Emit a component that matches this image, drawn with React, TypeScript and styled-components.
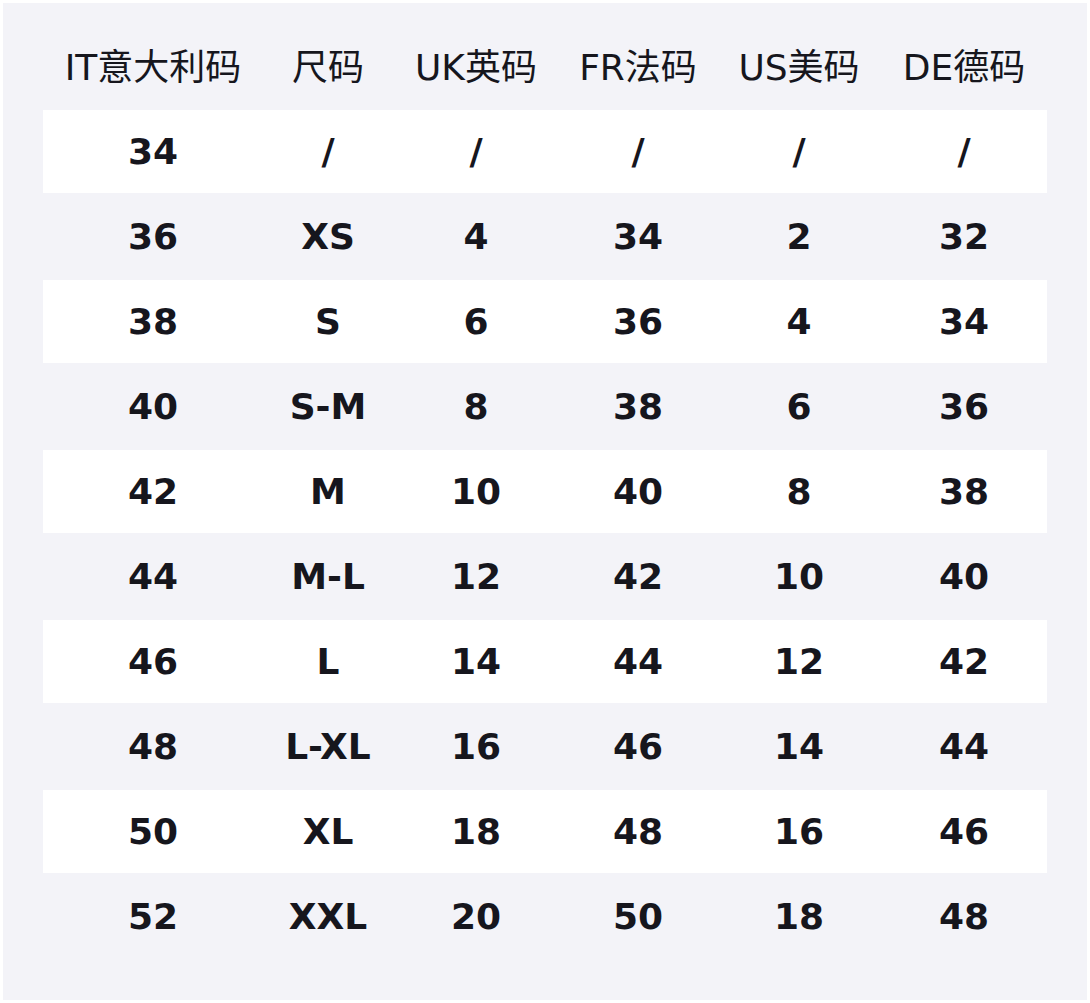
import { createGlobalStyle, styled } from "styled-components";

const GlobalStyle = createGlobalStyle`
  html, body {
    margin: 0;
    padding: 0;
    background: #ffffff;
  }
`

const Panel = styled.div`
  box-sizing: border-box;
  margin: 3px;
  width: 1084px;
  height: 997px;
  padding: 21px 40px 0;
  background: #f3f3f8;
  font-family: "DejaVu Sans", "Noto Sans CJK SC", sans-serif;
  color: #16161d;
`

const Row = styled.div<{ $striped?: boolean }>`
  display: grid;
  grid-template-columns: 220px 130px 166px 158px 164px 166px;
  height: 85px;
  box-sizing: border-box;
  align-items: center;
  background: ${(props) => (props.$striped ? "#ffffff" : "transparent")};
  border-top: 1px solid #f3f3f8;
  border-bottom: 1px solid #f3f3f8;
`

const HeadCell = styled.div`
  text-align: center;
  font-size: 36px;
  font-weight: 400;
  line-height: 1;
  margin-top: 2px;
`

const Cell = styled.div`
  text-align: center;
  font-size: 36px;
  font-weight: 700;
  line-height: 1;
`

const heads = ["IT意大利码", "尺码", "UK英码", "FR法码", "US美码", "DE德码"];

const rows: string[][] = [
  ["34", "/", "/", "/", "/", "/"],
  ["36", "XS", "4", "34", "2", "32"],
  ["38", "S", "6", "36", "4", "34"],
  ["40", "S-M", "8", "38", "6", "36"],
  ["42", "M", "10", "40", "8", "38"],
  ["44", "M-L", "12", "42", "10", "40"],
  ["46", "L", "14", "44", "12", "42"],
  ["48", "L-XL", "16", "46", "14", "44"],
  ["50", "XL", "18", "48", "16", "46"],
  ["52", "XXL", "20", "50", "18", "48"],
];

const App: React.FC = () => {
  return (
    <>
      <GlobalStyle />
      <Panel>
        <Row>
          {heads.map((h) => (
            <HeadCell key={h}>{h}</HeadCell>
          ))}
        </Row>
        {rows.map((r, i) => (
          <Row key={r[0]} $striped={i % 2 === 0}>
            {r.map((c, j) => (
              <Cell key={j}>{c}</Cell>
            ))}
          </Row>
        ))}
      </Panel>
    </>
  );
}

export default App;
